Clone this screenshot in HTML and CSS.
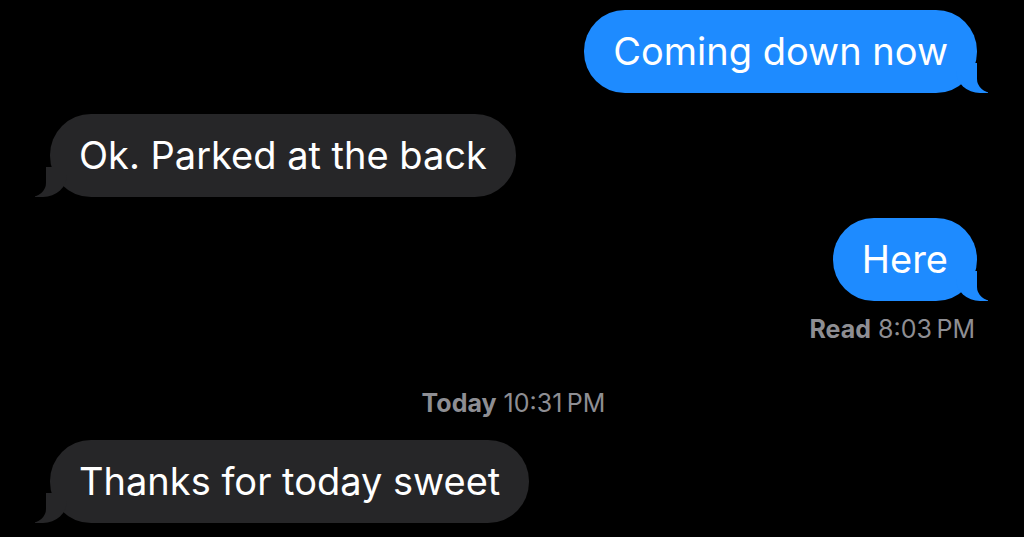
FILE: index.html
```html
<!DOCTYPE html>
<html lang="en">
<head>
  <meta charset="UTF-8">
  <meta name="viewport" content="width=device-width, initial-scale=1">
  <title>Messages</title>
  <link rel="stylesheet" href="styles.css">
</head>
<body>
  <div class="thread">
    <!-- outgoing -->
    <div class="bubble sent">Coming down now</div>
    <div class="bubble received">Ok. Parked at the back</div>
    <div class="bubble sent">Here</div>
    <div class="status"><strong>Read</strong> 8:03&#8201;PM</div>

    <!-- new day -->
    <div class="stamp"><strong>Today</strong> 10:31&#8201;PM</div>
    <div class="bubble received">Thanks for today sweet</div>
  </div>
</body>
</html>
```

FILE: styles.css
```css
body {
  margin: 0;
  background-color: #000;
  font-family: Inter, "Noto Sans", sans-serif;
  overflow: hidden;
}
.thread {
  display: flex;
  flex-direction: column;
  padding: 10px 47px 0 50px;
}
.bubble {
  position: relative;
  font-size: 38px;
  line-height: 45px;
  padding: 19px 29px;
  border-radius: 41px;
  color: #fff;
  max-width: 70%;
  margin-bottom: 21px;
}
.sent {
  align-self: flex-end;
  background-color: #1e8bff;
}
.received {
  align-self: flex-start;
  background-color: #262628;
}
/* tails */
.bubble::before,
.bubble::after {
  content: "";
  position: absolute;
  bottom: 0;
  height: 30px;
}
.sent::before {
  right: -11px;
  width: 32px;
  background-color: #1e8bff;
  border-bottom-left-radius: 24px 22px;
}
.sent::after {
  right: -32px;
  width: 32px;
  background-color: #000;
  border-bottom-left-radius: 16px 14px;
}
.received::before {
  left: -15px;
  width: 32px;
  background-color: #262628;
  border-bottom-right-radius: 24px 22px;
}
.received::after {
  left: -36px;
  width: 32px;
  background-color: #000;
  border-bottom-right-radius: 16px 14px;
}
.status,
.stamp {
  color: #8e8e93;
  font-size: 25px;
  line-height: 30px;
}
.status {
  align-self: flex-end;
  margin-top: -8px;
  margin-bottom: 44px;
  margin-right: 2px;
}
.stamp {
  align-self: center;
  margin-bottom: 22px;
}
```
